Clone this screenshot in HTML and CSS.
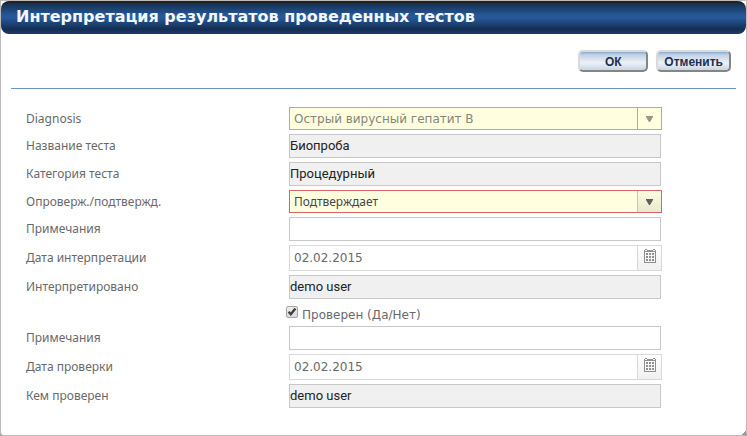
FILE: index.html
```html
<!DOCTYPE html>
<html lang="ru">
<head>
<meta charset="utf-8">
<title>Интерпретация результатов проведенных тестов</title>
<link rel="stylesheet" href="styles.css">
</head>
<body>
<main class="dialog">
  <header class="dialog-header"><h1 class="dialog-title">Интерпретация результатов проведенных тестов</h1></header>
  <form class="dialog-body">
    <div class="actions">
      <button type="button" class="btn btn-ok">ОК</button>
      <button type="button" class="btn">Отменить</button>
    </div>
    <div class="fields">
      <label class="name" for="diagnosis">Diagnosis</label>
      <div class="combo combo-disabled">
        <select id="diagnosis" class="combo-input" disabled><option>Острый вирусный гепатит B</option></select>
        <span class="combo-arrow"><svg width="7" height="6" viewBox="0 0 7 6"><path d="M0 0h7v1L4 6H3L0 1z" fill="currentColor"/></svg></span>
      </div>

      <label class="name" for="test-name">Название теста</label>
      <input id="test-name" class="text" type="text" value="Биопроба" readonly>

      <label class="name" for="test-category">Категория теста</label>
      <input id="test-category" class="text" type="text" value="Процедурный" readonly>

      <label class="name" for="verdict">Опроверж./подтвержд.</label>
      <div class="combo">
        <select id="verdict" class="combo-input"><option>Подтверждает</option></select>
        <span class="combo-arrow"><svg width="7" height="6" viewBox="0 0 7 6"><path d="M0 0h7v1L4 6H3L0 1z" fill="currentColor"/></svg></span>
      </div>

      <label class="name" for="notes">Примечания</label>
      <input id="notes" class="text" type="text">

      <label class="name" for="interpret-date">Дата интерпретации</label>
      <div class="date">
        <input id="interpret-date" class="date-input" type="text" value="02.02.2015">
        <button type="button" class="date-button" aria-label="Календарь"><svg width="12" height="14" viewBox="0 0 12 14" shape-rendering="crispEdges"><path fill="#8f8f8f" fill-rule="evenodd" d="M1 0h2v1h6V0h2v1h1v13H0V1h1zM1 3v10h10V3z"/><path fill="#8f8f8f" d="M2 4h2v2H2zM5 4h2v2H5zM8 4h2v2H8zM2 7h2v2H2zM5 7h2v2H5zM8 7h2v2H8zM2 10h2v2H2zM5 10h2v2H5zM8 10h2v2H8z"/><path fill="#fff" d="M1 1h2v1H1zM9 1h2v1H9z"/></svg></button>
      </div>

      <label class="name" for="interpreted-by">Интерпретировано</label>
      <input id="interpreted-by" class="text" type="text" value="demo user" readonly>

      <div class="check-row">
        <span class="check">
          <input id="verified" class="check-input" type="checkbox" checked>
          <svg class="check-mark" width="12" height="12" viewBox="0 0 12 12"><path d="M2.6 5.8 4.8 8.3 9.4 2.5" fill="none" stroke="#3c3c3c" stroke-width="2.3"/></svg>
        </span>
        <label class="check-label" for="verified">Проверен (Да/Нет)</label>
      </div>

      <label class="name" for="check-notes">Примечания</label>
      <input id="check-notes" class="text" type="text">

      <label class="name" for="check-date">Дата проверки</label>
      <div class="date">
        <input id="check-date" class="date-input" type="text" value="02.02.2015">
        <button type="button" class="date-button" aria-label="Календарь"><svg width="12" height="14" viewBox="0 0 12 14" shape-rendering="crispEdges"><path fill="#8f8f8f" fill-rule="evenodd" d="M1 0h2v1h6V0h2v1h1v13H0V1h1zM1 3v10h10V3z"/><path fill="#8f8f8f" d="M2 4h2v2H2zM5 4h2v2H5zM8 4h2v2H8zM2 7h2v2H2zM5 7h2v2H5zM8 7h2v2H8zM2 10h2v2H2zM5 10h2v2H5zM8 10h2v2H8z"/><path fill="#fff" d="M1 1h2v1H1zM9 1h2v1H9z"/></svg></button>
      </div>

      <label class="name" for="checked-by">Кем проверен</label>
      <input id="checked-by" class="text" type="text" value="demo user" readonly>
    </div>
  </form>
  <svg class="grip" width="4" height="4" viewBox="0 0 4 4" shape-rendering="crispEdges"><path fill="#999" d="M3 0h1v4H0V3h1V2h1V1h1z"/></svg>
</main>
</body>
</html>
```
FILE: styles.css
```css
* {
  box-sizing: border-box;
}

body {
  margin: 0;
  background: #a9a9a9;
  color: #696969;
  font: 12px/16px "Noto Sans", sans-serif;
}

.dialog {
  position: relative;
  min-height: 100vh;
  border: 1px solid #bbb;
  border-radius: 0 0 4px 4px;
  background: #fff;
}

.dialog-header {
  height: 33px;
  padding: 4px 15px;
  border-top: 2px solid #1d2327;
  border-radius: 8px;
  background: linear-gradient(#15304f, #265a9c 42%, #255795 50%, #142e52 84%, #1a3a6c);
}

.dialog-title {
  margin: 0;
  color: #f4f7fb;
  font: bold 16px/20px "DejaVu Sans", sans-serif;
}

.actions {
  display: flex;
  justify-content: flex-end;
  gap: 8px;
  margin: 0 10px;
  padding: 16px 5px;
  border-bottom: 1px solid #6f94c0;
}

.btn {
  height: 22px;
  padding: 2px 6px 0;
  border: 2px solid;
  border-color: #dadada #858585 #858585 #dadada;
  border-radius: 5px;
  background: linear-gradient(#86a8cd, #c0d0e4 15%, #edf1f7 60%, #c9d5e4);
  color: #1c2f50;
  font: bold 12px/16px "Liberation Sans", sans-serif;
}

.btn-ok {
  min-width: 70px;
}

.fields {
  display: grid;
  grid-template-columns: 263px minmax(0, 1fr);
  row-gap: 4px;
  align-items: center;
  padding: 18px 84px 26px 25px;
}

.text {
  height: 24px;
  margin-right: 1px;
  padding: 0 0 2px;
  border: 1px solid #c8c8c8;
  background: #fff;
  color: #222;
  font: 13px Roboto, sans-serif;
}

.text:read-only {
  background: #f0f0f0;
}

.combo {
  position: relative;
  display: grid;
  height: 23px;
  border: 1px solid #dc6464;
  background: #ffffe0;
}

.combo-input {
  appearance: none;
  width: 100%;
  padding: 0 28px 0 4px;
  border: 0;
  background: none;
  color: #464646;
  font: inherit;
  opacity: 1;
}

.combo-arrow {
  position: absolute;
  inset: 0 0 0 auto;
  display: grid;
  place-items: center;
  width: 24px;
  border-left: 1px solid #c5c5b0;
  background: linear-gradient(#fdfde0, #e8e8cf);
  color: #5f5f5f;
  pointer-events: none;
}

.combo-disabled {
  border-color: #ee9090;
}

.combo-disabled .combo-input {
  color: #85857a;
  font-family: "DejaVu Sans", sans-serif;
}

.combo-disabled .combo-arrow {
  border-color: #ee9090;
  background: #ffffe0;
  color: #96968a;
}

.date {
  display: flex;
  height: 26px;
  border: 1px solid #d9d9d9;
}

.date-input {
  flex: 1;
  min-width: 0;
  padding: 0 4px;
  border: 0;
  background: #fff;
  color: #696969;
  font: 12px "DejaVu Sans", sans-serif;
}

.date-button {
  display: flex;
  justify-content: center;
  width: 24px;
  padding: 3px 0 0;
  border: 0;
  border-left: 1px solid #d9d9d9;
  background: linear-gradient(#fff, #f0f0f0);
}

.check-row {
  grid-column: 2;
  display: flex;
  gap: 4px;
  height: 19px;
  margin-left: -3px;
}

.check {
  position: relative;
  width: 12px;
  height: 12px;
  margin-top: 3px;
}

.check-input {
  appearance: none;
  display: block;
  width: 12px;
  height: 12px;
  margin: 0;
  border: 1px solid #a5a5a5;
  border-radius: 2px;
  background: linear-gradient(#eee, #d9d9d9);
}

.check-mark {
  position: absolute;
  inset: 0;
  display: none;
  pointer-events: none;
}

.check-input:checked + .check-mark {
  display: block;
}

.check-label {
  padding-top: 4px;
  font-family: "DejaVu Sans", sans-serif;
}

.grip {
  position: absolute;
  right: 0;
  bottom: 0;
}
```
